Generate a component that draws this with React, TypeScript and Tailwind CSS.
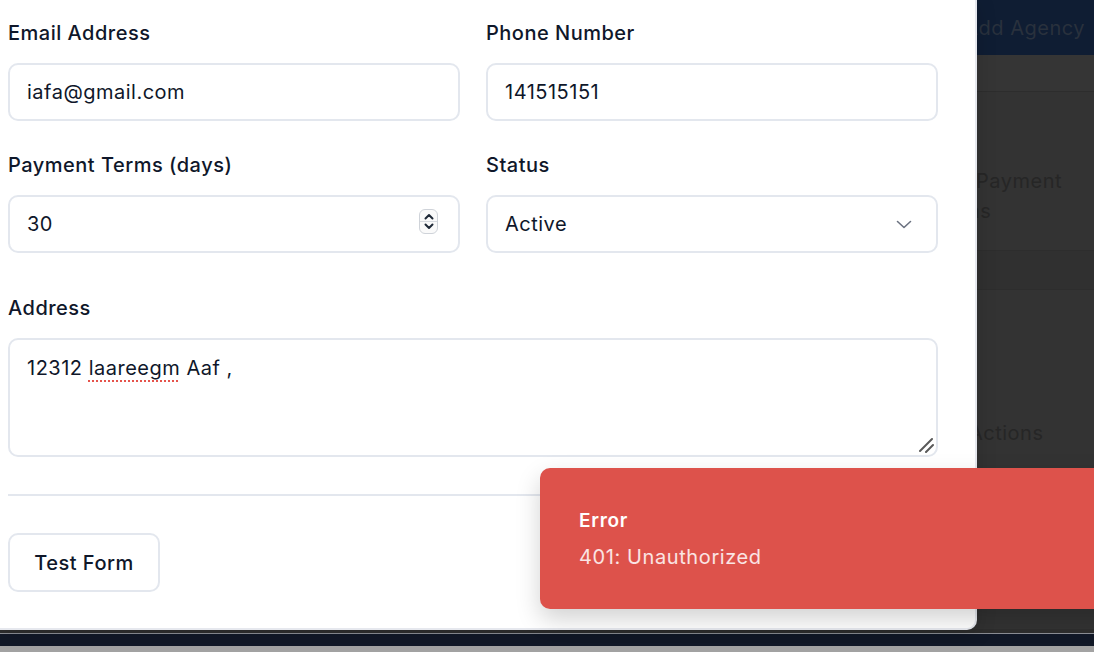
import type { ReactNode } from "react";

const font = { fontFamily: "Inter, 'Noto Sans', sans-serif" };

function Field({ label, children, className = "" }: { label: string; children: ReactNode; className?: string }) {
  return (
    <div className={className}>
      <p className="h-[28px] text-[20px] leading-[28px] font-medium tracking-[0.5px] text-[#0f172a]">{label}</p>
      <div className="mt-[16px]">{children}</div>
    </div>
  );
}

function Box({ children, className = "" }: { children: ReactNode; className?: string }) {
  return (
    <div
      className={`relative flex h-[58px] items-center rounded-[10px] border-2 border-[#e3e7ee] bg-white px-[17px] text-[20px] tracking-[0.5px] text-[#0f172a] ${className}`}
    >
      {children}
    </div>
  );
}

function Spinner() {
  return (
    <div className="absolute right-[20px] top-[12px] flex h-[25px] w-[19px] flex-col items-center justify-between rounded-[6px] border border-[#cfd3d9] bg-[#fafafa] py-[3px]">
      <svg width="10" height="7" viewBox="0 0 10 7" fill="none">
        <path d="M1.5 5.5 5 2l3.5 3.5" stroke="#1f2937" strokeWidth="2" strokeLinecap="round" strokeLinejoin="round" />
      </svg>
      <div className="h-px w-full bg-[#d8dbe0]" />
      <svg width="10" height="7" viewBox="0 0 10 7" fill="none">
        <path d="M1.5 1.5 5 5l3.5-3.5" stroke="#1f2937" strokeWidth="2" strokeLinecap="round" strokeLinejoin="round" />
      </svg>
    </div>
  );
}

export default function App() {
  return (
    <div className="relative h-[652px] w-full overflow-hidden bg-[#333333] tracking-[0.5px]" style={font}>
      {/* dimmed page underneath */}
      <div className="flex h-full flex-col">
        <div className="flex h-[55px] items-center justify-end bg-[#0f1d33] pr-[9px]">
          <span className="text-[20px] text-[#29313d]">Add Agency</span>
        </div>
        <div className="flex flex-1 flex-col">
          <div className="h-[37px] border-b border-[#2d2d2d] bg-[#353535]" />
          <div className="flex h-[158px] flex-col justify-center pl-[976px] pt-[50px] text-[20px] leading-[30px] text-[#262626]">
            <span>Payment</span>
            <span className="ml-[-46px]">Terms</span>
          </div>
          <div className="h-[40px] border-y border-[#2d2d2d] bg-[#303030]" />
          <div className="flex flex-1 items-start pl-[977px] pt-[128px] text-[20px] text-[#262626]">
            <span className="ml-[-8px]">Actions</span>
          </div>
        </div>
        <div className="h-[4px] bg-[#2e2e2e]" />
        <div className="h-px bg-[#8c8f96]" />
        <div className="h-[12px] bg-[#111827]" />
        <div className="h-[6px] bg-[#a3a3a3]" />
      </div>

      {/* modal */}
      <div className="absolute left-0 top-0 h-[630px] w-[977px] rounded-br-[10px] border-b-2 border-r-2 border-[#e6e8ee] bg-white pl-[8px] pt-[19px] shadow-[0_4px_20px_rgba(0,0,0,0.15)]">
        <div className="w-[930px]">
          <div className="grid grid-cols-2 gap-x-[26px] gap-y-[30px]">
            <Field label="Email Address">
              <Box>iafa@gmail.com</Box>
            </Field>
            <Field label="Phone Number">
              <Box>141515151</Box>
            </Field>
            <Field label="Payment Terms (days)">
              <Box>
                30
                <Spinner />
              </Box>
            </Field>
            <Field label="Status">
              <Box className="justify-between pr-[24px]">
                <span>Active</span>
                <svg width="16" height="9" viewBox="0 0 16 9" fill="none">
                  <path d="M1.5 1.5 8 7.5l6.5-6" stroke="#6b7280" strokeWidth="1.6" strokeLinecap="round" strokeLinejoin="round" />
                </svg>
              </Box>
            </Field>
          </div>

          <Field label="Address" className="mt-[41px]">
            <div className="relative h-[119px] rounded-[10px] border-2 border-[#e3e7ee] bg-white px-[17px] pt-[14px] text-[20px] leading-[28px] tracking-[0.5px] text-[#0f172a]">
              12312{" "}
              <span className="underline decoration-[#e5534b] decoration-dotted decoration-2 underline-offset-[5px]">laareegm</span>{" "}
              Aaf ,
              <svg className="absolute bottom-[2px] right-[2px]" width="16" height="16" viewBox="0 0 16 16" fill="none">
                <path d="M2 14 14 2M8 15l7-7" stroke="#5a5a5a" strokeWidth="2" strokeLinecap="round" />
              </svg>
            </div>
          </Field>

          <div className="mt-[37px] h-[2px] bg-[#e3e7ee]" />

          <button className="mt-[37px] flex h-[59px] w-[152px] items-center justify-center rounded-[10px] border-2 border-[#e3e7ee] bg-white text-[20px] font-medium tracking-[0.5px] text-[#0f172a]">
            Test Form
          </button>
        </div>
      </div>

      {/* toast */}
      <div className="absolute left-[540px] top-[468px] flex h-[141px] w-[600px] flex-col justify-center rounded-l-[10px] bg-[#dd524b] pl-[39px] shadow-[0_10px_25px_rgba(0,0,0,0.18)]">
        <p className="text-[19px] font-semibold leading-[28px] tracking-[0.7px] text-white">Error</p>
        <p className="mt-[8px] text-[20px] leading-[28px] tracking-[0.6px] text-white/85">401: Unauthorized</p>
      </div>
    </div>
  );
}
